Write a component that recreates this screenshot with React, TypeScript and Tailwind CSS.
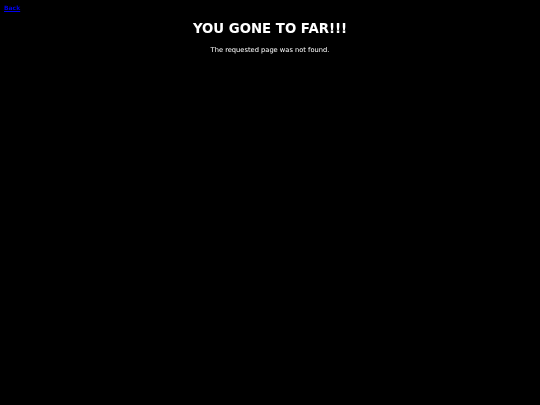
export default function App() {
  return (
    <div className="min-h-[405px] w-full bg-black font-['DejaVu_Sans',sans-serif] text-white relative">
      <a href="#" className="absolute left-[4px] top-[4px] text-[6px] font-bold leading-[8px] text-[#0000ee] underline [will-change:transform]">
        Back
      </a>
      <div className="flex flex-col items-center pt-[21px] [will-change:transform]">
        <h1 className="text-[13.3px] font-bold leading-[16px]">YOU GONE TO FAR!!!</h1>
        <p className="mt-[9px] text-[6.7px] leading-[8px]">The requested page was not found.</p>
      </div>
    </div>
  );
}
